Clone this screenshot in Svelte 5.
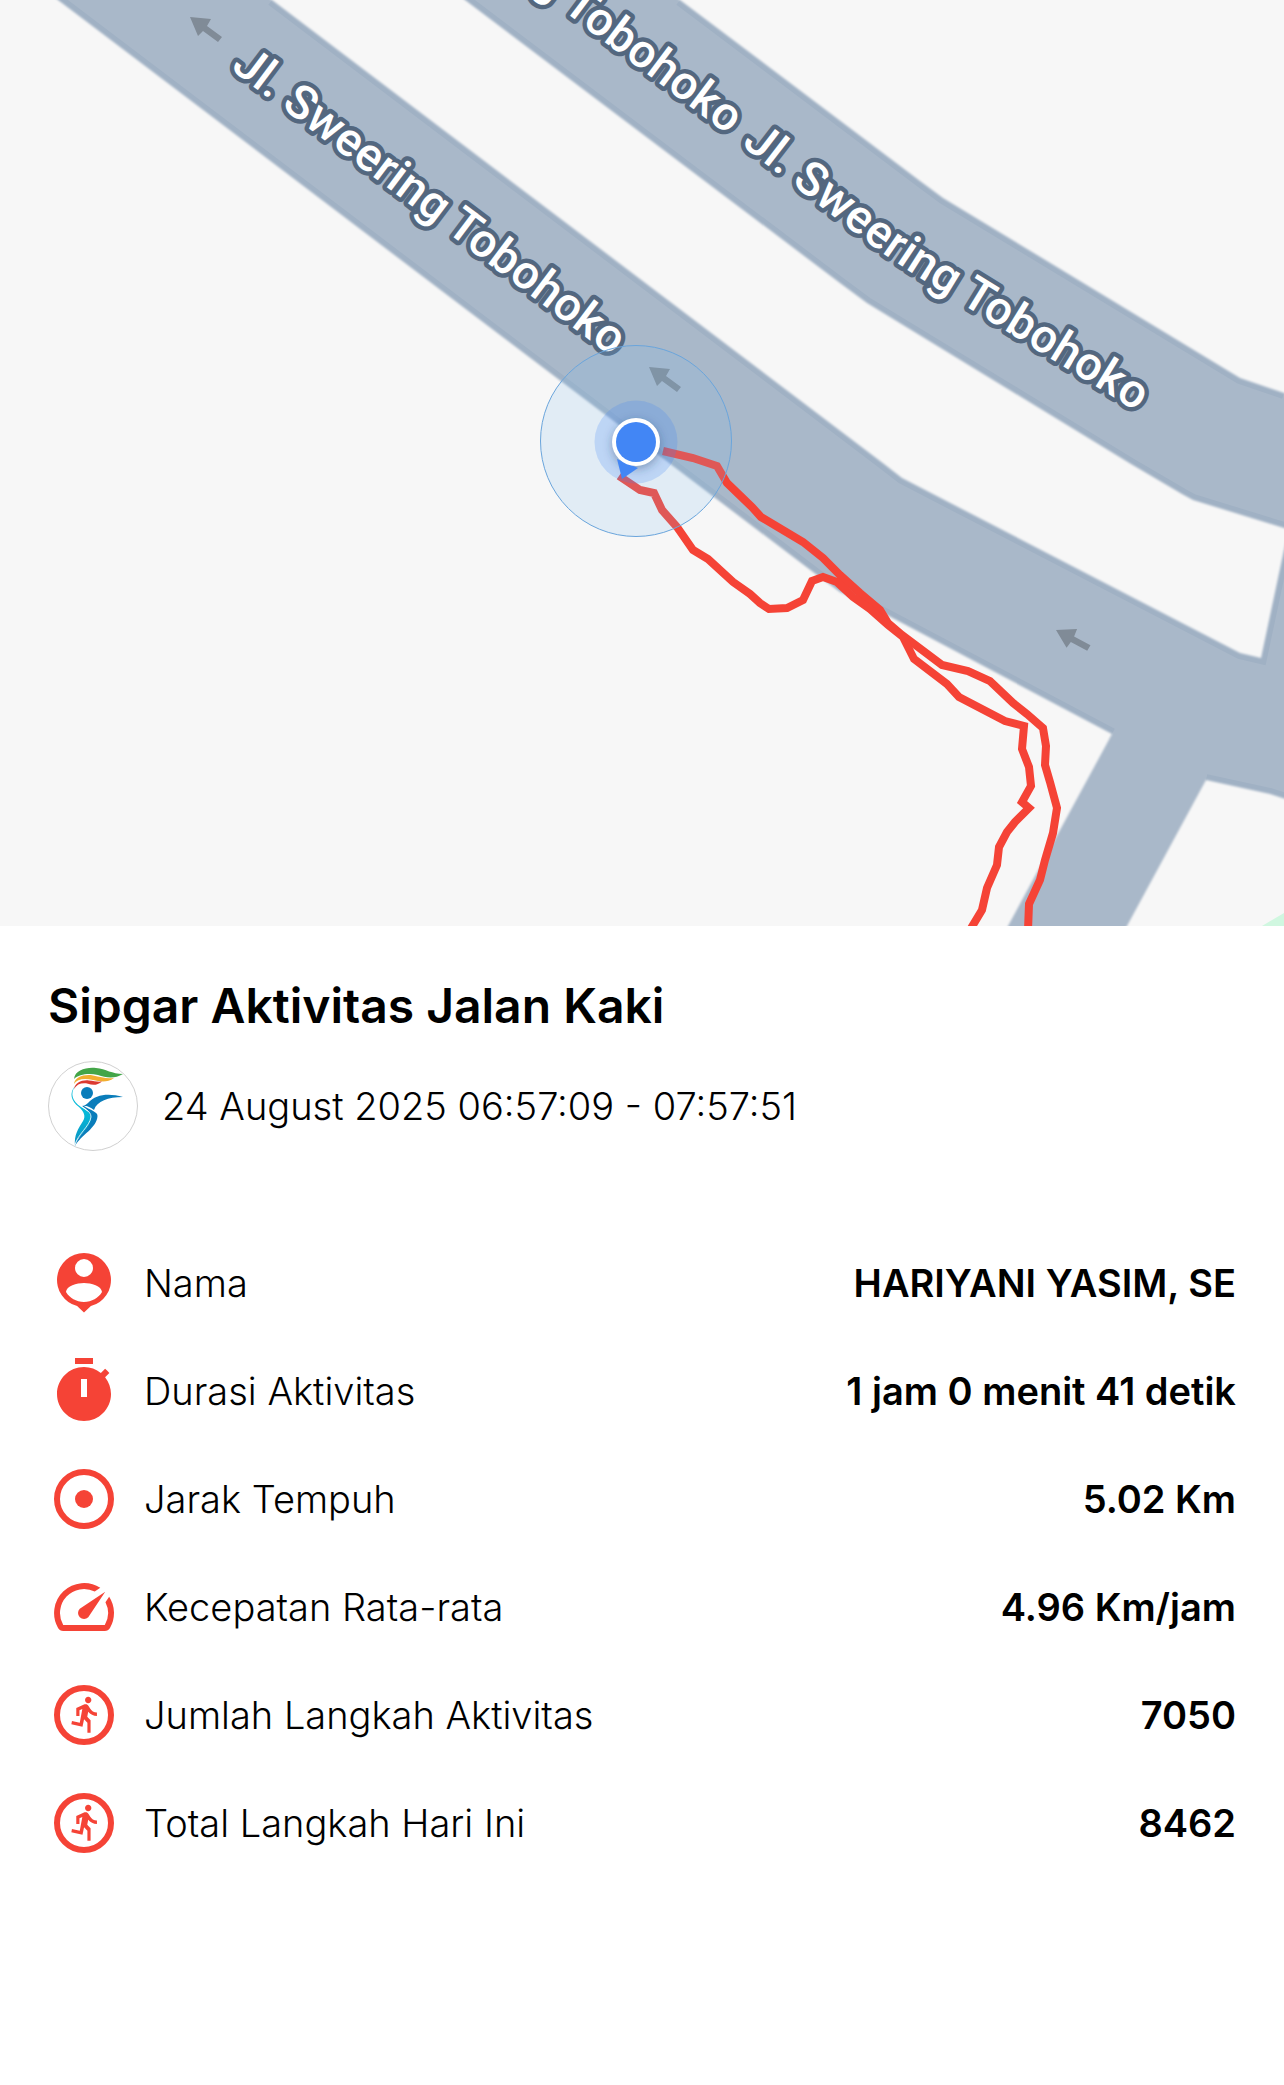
<script>
  const stats = [
    { icon: 'person', label: 'Nama', value: 'HARIYANI YASIM, SE' },
    { icon: 'timer', label: 'Durasi Aktivitas', value: '1 jam 0 menit 41 detik' },
    { icon: 'target', label: 'Jarak Tempuh', value: '5.02 Km' },
    { icon: 'speed', label: 'Kecepatan Rata-rata', value: '4.96 Km/jam' },
    { icon: 'run', label: 'Jumlah Langkah Aktivitas', value: '7050' },
    { icon: 'run', label: 'Total Langkah Hari Ini', value: '8462' }
  ];

  const arrows = [
    'translate(190 17)',
    'translate(649 367)',
    'translate(1056 630) rotate(-8)'
  ];

  // Land between the streets; everything not covered by land reads as road.
  const land = [
    'M-20 -59 L58 0 L500 335 L817 575 L840 592 L887 615 L1112 734 L1008 926 L1000 950 L-20 950Z',
    'M272 0 L884 464 L902 478 L1240 653 L1261 658 L1284 550 L1310 430 L1310 536 L1284 528 L1193 500 L1182 494 L1131 464 L867 303 L840 283 L465 0 L450 -12 L256 -12Z',
    'M680 0 L920 181 L943 198 L1240 378 L1284 393 L1310 402 L1310 -20 L654 -20Z',
    'M1206 780 L1270 794 L1310 807 L1310 950 L1114 950Z'
  ];
  const kerbs = [
    'M58 0 L500 335 L817 575 L840 592 L887 615 L1112 734',
    'M272 0 L884 464 L902 478 L1240 653 L1261 658 L1284 550',
    'M465 0 L840 283 L867 303 L1131 464 L1182 494 L1193 500 L1284 528',
    'M680 0 L920 181 L943 198 L1240 378 L1284 393',
    'M1206 780 L1270 794 L1300 804'
  ];
</script>

<main>
  <svg class="map" viewBox="0 0 1284 926" role="img" aria-label="Peta rute aktivitas">
    <defs>
      <path id="street" d="M741 145 L850 229 Q885 256 920 278 L1220 463" />
      <filter id="soft" x="-5%" y="-5%" width="110%" height="110%">
        <feGaussianBlur stdDeviation="1" />
      </filter>
      <filter id="shadow" x="-50%" y="-50%" width="200%" height="200%">
        <feGaussianBlur stdDeviation="5" />
      </filter>
    </defs>
    <rect width="1284" height="926" class="road" />
    {#each kerbs as d}<path {d} class="kerb" />{/each}
    <g filter="url(#soft)">
      {#each land as d}<path {d} class="land" />{/each}
    </g>
    <path d="M1262 926 L1284 913 L1284 926Z" class="park" />
    {#each arrows as t}
      <path class="arrow" transform={t} d="M0 0 L21 2 L17 9 L32 20 L28 25 L13 14 L8 19Z" />
    {/each}
    <g class="street-name">
      <text transform="translate(230 69) rotate(37)">Jl. Sweering Tobohoko</text>
      <text text-anchor="end" transform="translate(728 135) rotate(37)">Jl. Sweering Tobohoko</text>
      <text><textPath href="#street">Jl. Sweering Tobohoko</textPath></text>
    </g>
    <g class="route">
      <path d="M663 451 L693 458 L717 466 L727 483 L752 507 L761 517 L803 542 L823 558 L840 575 L860 593 L880 610 L888 623 L902 635 L942 665 L968 671 L990 681 L1013 703 L1027 714 L1043 728 L1046 746 L1045 765 L1050 782 L1057 808 L1053 833 L1045 860 L1040 880 L1029 904 L1028 930" />
      <path d="M619 476 L640 490 L654 493 L662 510 L677 527 L684 537 L693 550 L708 559 L733 582 L750 594 L760 603 L769 609 L787 608 L803 600 L812 581 L823 577 L837 582 L853 597 L870 609 L888 625 L903 637 L914 659 L947 684 L959 697 L1005 721 L1024 726 L1022 749 L1029 767 L1031 786 L1022 802 L1029 808 L1015 822 L1007 832 L999 847 L997 865 L987 888 L982 910 L970 930" />
    </g>
    <circle cx="636" cy="441" r="95.5" class="accuracy" />
    <circle cx="636" cy="442" r="41.5" class="halo" />
    <circle cx="636" cy="445" r="24" class="drop" filter="url(#shadow)" />
    <path d="M617 459 L622 479 L638 468Z" class="dot" />
    <circle cx="636" cy="442" r="24" fill="#fff" />
    <circle cx="636" cy="442" r="20" class="dot" />
  </svg>

  <section class="details">
    <h1>Sipgar Aktivitas Jalan Kaki</h1>
    <div class="when">
      <svg class="logo" viewBox="0 0 90 90" aria-hidden="true">
        <defs>
          <linearGradient id="body" x1="0" y1="0" x2="0" y2="1">
            <stop offset="0" stop-color="#06b9d8" />
            <stop offset=".45" stop-color="#06b9d8" />
            <stop offset="1" stop-color="#0a8fc0" />
          </linearGradient>
        </defs>
        <circle cx="45" cy="45" r="44.5" fill="#fff" stroke="#c4c4c4" stroke-width=".8" />
        <path fill="#43a548" d="M26 18 C27 9 38 6 48 7 C58 8 64 13 75 13 C67 18 58 17 50 14 C41 12 31 13 26 18Z" />
        <path fill="#f2ae30" d="M26 23 C27 16 36 13 45 14.500 C53 16 58 18 66 17 C59 22 52 20.500 45 19 C36 17 29 18 26 23Z" />
        <path fill="#dc3a30" d="M26 28 C27 22 34 18.500 41 19.500 C46 20 49 21 54 20.500 C49 25 44 24 40 22.800 C34 21.500 29 23 26 28Z" />
        <path fill="url(#body)" d="M27 25 C22 33 24 40 33 46 C41 51 48 55 44 63 C38 71 28 76 27 85 C26 74 30 68 35 60 C38 55 36 51 31 46 C23 40 21 32 27 25Z" />
        <path fill="#0a7dba" d="M75 36 C61 32 48 33 40 42 L36 45 C42 49 50 51 49.500 55 C49 67 33 74 27 85 C29 75 44 66 43 56 C42 51 38 48 34 45 C38 44 42 46 46 49 C49 40 60 36 75 36Z" />
        <path fill="none" stroke="#fff" stroke-width=".8" d="M30 42 C35 48 43 49 43 56 C42 65 29 74 27 84" />
        <circle cx="39" cy="32" r="6" fill="#0a7dba" />
      </svg>
      <time datetime="2025-08-24T06:57:09">24 August 2025 06:57:09 - 07:57:51</time>
    </div>

    <dl>
      {#each stats as s}
        <div class="row">
          <dt>
            <svg class="icon" viewBox="0 0 24 24" aria-hidden="true">
              {#if s.icon === 'person'}
                <path fill-rule="evenodd" d="M12 2a9 9 0 0 0-2.300 17.700L12 21.800l2.300-2.100A9 9 0 0 0 12 2zM12 4a3 3 0 1 1 0 6 3 3 0 0 1 0-6zM6 15C6.100 13 9.600 12 12 12s5.900 1 6 3c-1.200 2-3.400 3.300-6 3.300S7.200 17 6 15z" />
              {:else if s.icon === 'timer'}
                <path fill-rule="evenodd" d="M15 1H9v2h6V1zm-4 13h2V8h-2v6zm8.030-6.610l1.420-1.420c-.43-.51-.9-.99-1.410-1.410l-1.420 1.420C16.070 4.740 14.120 4 12 4c-4.970 0-9 4.030-9 9s4.020 9 9 9 9-4.030 9-9c0-2.120-.74-4.070-1.970-5.610z" />
              {:else if s.icon === 'speed'}
                <path d="M20.380 8.570l-1.230 1.850a8 8 0 0 1-.22 7.580H5.070A8 8 0 0 1 15.580 6.850l1.850-1.230A10 10 0 0 0 3.350 19a2 2 0 0 0 1.720 1h13.850a2 2 0 0 0 1.740-1 10 10 0 0 0-.27-10.440zm-9.790 6.840a2 2 0 0 0 2.830 0l5.660-8.490-8.490 5.660a2 2 0 0 0 0 2.830z" />
              {:else}
                <circle cx="12" cy="12" r="9" class="ring" />
                {#if s.icon === 'target'}
                  <circle cx="12" cy="12" r="3" />
                {:else}
                  <path transform="translate(6.250 5.050) scale(.53 .56)" d="M13.490 5.480c1.100 0 2-.9 2-2s-.9-2-2-2-2 .9-2 2 .9 2 2 2zm-3.600 13.900l1-4.400 2.100 2v6h2v-7.500l-2.100-2 .6-3c1.300 1.500 3.300 2.500 5.500 2.500v-2c-1.900 0-3.500-1-4.300-2.400l-1-1.600c-.4-.6-1-1-1.700-1-.3 0-.5.1-.8.1l-5.200 2.200v4.700h2v-3.400l1.800-.7-1.600 8.100-4.900-1-.4 2 7 1.400z" />
                {/if}
              {/if}
            </svg>
            {s.label}
          </dt>
          <dd>{s.value}</dd>
        </div>
      {/each}
    </dl>
  </section>
</main>

<style>
  :global(body) {
    margin: 0;
    background: #fff;
  }
  main {
    color: #000;
    font-family: Inter, 'Liberation Sans', sans-serif;
    font-size: 38px;
    line-height: 44px;
  }
  .map {
    display: block;
    width: 100%;
    height: auto;
  }
  .road { fill: #a9b8c9; }
  .kerb { fill: none; stroke: #a0b1c4; stroke-width: 12; }
  .land { fill: #f7f7f7; }
  .park { fill: #d0f7e0; }
  .arrow { fill: #808b97; }
  .street-name {
    font-family: Roboto, sans-serif;
    font-size: 47px;
    font-weight: 500;
    fill: #fff;
    stroke: #53677f;
    stroke-width: 9px;
    stroke-linejoin: round;
    paint-order: stroke;
  }
  .route path { fill: none; stroke: #f54336; stroke-width: 8; }
  .accuracy { fill: rgba(130, 188, 236, 0.18); stroke: #6aa5dc; stroke-width: 1; }
  .halo { fill: rgba(66, 134, 245, 0.22); }
  .drop { fill: rgba(40, 60, 100, 0.4); }
  .dot { fill: #4286f5; }

  .details { padding: 52px 48px; }
  h1 {
    margin: 0;
    font-size: 48px;
    line-height: 56px;
    font-weight: 600;
  }
  .when {
    display: flex;
    align-items: center;
    gap: 24px;
    margin-top: 27px;
    font-weight: 300;
  }
  .logo {
    flex: none;
    width: 90px;
    height: 90px;
  }
  dl {
    display: grid;
    gap: 36px;
    margin: 96px 0 0;
  }
  .row {
    display: flex;
    align-items: center;
    justify-content: space-between;
    gap: 24px;
  }
  dt {
    display: flex;
    align-items: center;
    gap: 24px;
    font-weight: 300;
  }
  dd {
    margin: 0;
    font-weight: 600;
    text-align: right;
  }
  .icon {
    flex: none;
    width: 72px;
    height: 72px;
    fill: #f54336;
  }
  .ring { fill: none; stroke: #f54336; stroke-width: 2; }
</style>
